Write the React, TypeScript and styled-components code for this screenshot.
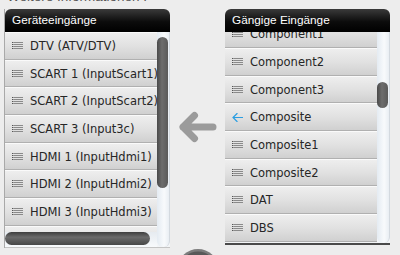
import React from 'react'
import styled, { createGlobalStyle } from 'styled-components'

const GlobalStyle = createGlobalStyle`
  html, body {
    margin: 0;
    padding: 0;
    background: #ededed;
    font-family: 'DejaVu Sans', Verdana, sans-serif;
  }
`

const Page = styled.div`
  width: 400px;
  height: 255px;
  overflow: hidden;
  padding-left: 4px;
  box-sizing: border-box;
`

const Intro = styled.div`
  margin: -10px 0 0 3px;
  height: 14px;
  line-height: 14px;
  font-family: 'Liberation Sans', Arial, sans-serif;
  font-size: 13.5px;
  color: #555;
`

const Columns = styled.div`
  display: flex;
  margin-top: 5px;
`

const Panel = styled.section<{ $width: number; $border?: boolean }>`
  width: ${(p) => p.$width}px;
  display: flex;
  flex-direction: column;
  box-sizing: border-box;
  border-left: ${(p) => (p.$border ? '1px solid #a9a9a9' : 'none')};
`

const PanelHeader = styled.header`
  height: 23px;
  border-radius: 6px 6px 0 0;
  background: linear-gradient(#3a3a3a, #0c0c0c 55%, #000);
  color: #fff;
  font-family: 'Liberation Sans', Arial, sans-serif;
  font-size: 11.8px;
  line-height: 23px;
  padding-left: 7px;
`

const PanelBody = styled.div<{ $height: number; $hscroll?: boolean; $shadow?: boolean }>`
  display: grid;
  grid-template-columns: 152px 1fr;
  grid-template-rows: ${(p) => (p.$hscroll ? '1fr 15px' : '1fr')};
  height: ${(p) => p.$height}px;
  border-bottom: ${(p) => (p.$shadow ? '2px solid #4a4a4a' : '1px solid #c4c4c4')};
  background: #f3f5f7;
`

const Viewport = styled.div`
  overflow: hidden;
`

const RowList = styled.ul<{ $offset: number }>`
  list-style: none;
  margin: ${(p) => -p.$offset}px 0 0;
  padding: 0;
`

const Row = styled.li`
  height: 27.7px;
  box-sizing: border-box;
  display: flex;
  align-items: center;
  gap: 7px;
  padding-left: 7px;
  background: linear-gradient(#eeeeee, #e1e1e1 50%, #d0d0d0);
  border-top: 1px solid #fafafa;
  border-bottom: 1px solid #b0b0b0;
  color: #262626;
  font-size: 11.5px;
  white-space: nowrap;
`

const RowIcon = styled.span`
  width: 11px;
  display: flex;
  align-items: center;
  flex: none;
`

const VTrack = styled.div<{ $span?: boolean }>`
  grid-row: ${(p) => (p.$span ? '1 / 3' : '1')};
  grid-column: 2;
  background: linear-gradient(90deg, #e4ebf2, #f8fafc 60%, #e9eef3);
  border-radius: 0 0 6px 6px;
  border-right: 1px solid #d3d9df;
  display: flex;
  flex-direction: column;
`

const VThumb = styled.div<{ $top: number; $length: number }>`
  margin: ${(p) => p.$top}px 1px 0 0;
  height: ${(p) => p.$length}px;
  width: 11px;
  border-radius: 6px;
  background: linear-gradient(90deg, #4a4a4a, #6d6d6d 45%, #5a5a5a);
`

const HTrack = styled.div`
  grid-row: 2;
  grid-column: 1;
  background: linear-gradient(#e6ebf0, #f8fafc);
  display: flex;
  align-items: flex-start;
  padding-right: 7px;
`

const HThumb = styled.div`
  flex: 1;
  height: 13px;
  border-radius: 7px;
  background: linear-gradient(#3e3e3e, #6b6b6b 40%, #474747);
`

const Middle = styled.div`
  width: 55px;
  display: flex;
  flex-direction: column;
  align-items: center;
`

const ArrowWrap = styled.div`
  margin-top: 102px;
`

const Disc = styled.div`
  margin: auto 0 -8px;
  height: 8px;
  overflow: hidden;
`

const HandleIcon = () => (
  <svg width="11" height="8" viewBox="0 0 11 8">
    {[0.5, 2.5, 4.5, 6.5].map((y) => (
      <g key={y}>
        <line x1="0" y1={y} x2="1.5" y2={y} stroke="#555" strokeWidth="1" />
        <line x1="2" y1={y} x2="11" y2={y} stroke="#8a8a8a" strokeWidth="1" />
      </g>
    ))}
  </svg>
)

const BackIcon = () => (
  <svg width="13" height="11" viewBox="0 0 13 11">
    <path d="M12.5 5.5H1.2M6 0.8L1.2 5.5L6 10.2" fill="none" stroke="#2a9ee2" strokeWidth="1.4" strokeLinecap="round" />
  </svg>
)

const BigArrow = () => (
  <svg width="40" height="32" viewBox="0 0 40 32">
    <path d="M35 16H5M16.5 4.5L5 16L16.5 27.5" fill="none" stroke="#9b9b9b" strokeWidth="7" strokeLinecap="round" strokeLinejoin="round" />
  </svg>
)

const DiscIcon = () => (
  <svg width="42" height="20" viewBox="0 0 42 20">
    <ellipse cx="21" cy="20" rx="20" ry="19" fill="#7c7c7c" />
    <ellipse cx="21" cy="21" rx="18" ry="17.5" fill="#595959" />
    <ellipse cx="21" cy="24" rx="12" ry="14" fill="#4c4c4c" />
  </svg>
)

type Item = { label: string; active?: boolean }

const deviceInputs: Item[] = [
  { label: 'DTV (ATV/DTV)' },
  { label: 'SCART 1 (InputScart1)' },
  { label: 'SCART 2 (InputScart2)' },
  { label: 'SCART 3 (Input3c)' },
  { label: 'HDMI 1 (InputHdmi1)' },
  { label: 'HDMI 2 (InputHdmi2)' },
  { label: 'HDMI 3 (InputHdmi3)' },
  { label: 'HDMI 4 (InputHdmi4)' },
]

const commonInputs: Item[] = [
  { label: 'Component1' },
  { label: 'Component2' },
  { label: 'Component3' },
  { label: 'Composite', active: true },
  { label: 'Composite1' },
  { label: 'Composite2' },
  { label: 'DAT' },
  { label: 'DBS' },
]

const InputList: React.FC<{ items: Item[]; offset: number }> = ({ items, offset }) => (
  <Viewport>
    <RowList $offset={offset}>
      {items.map((item) => (
        <Row key={item.label}>
          <RowIcon>{item.active ? <BackIcon /> : <HandleIcon />}</RowIcon>
          {item.label}
        </Row>
      ))}
    </RowList>
  </Viewport>
)

const App: React.FC = () => (
  <Page>
    <GlobalStyle />
    <Intro>Weitere Informationen :</Intro>
    <Columns>
      <Panel $width={166} $border>
        <PanelHeader>Geräteeingänge</PanelHeader>
        <PanelBody $height={215} $hscroll>
          <InputList items={deviceInputs} offset={0} />
          <VTrack $span>
            <VThumb $top={5} $length={151} />
          </VTrack>
          <HTrack>
            <HThumb />
          </HTrack>
        </PanelBody>
      </Panel>
      <Middle>
        <ArrowWrap>
          <BigArrow />
        </ArrowWrap>
        <Disc>
          <DiscIcon />
        </Disc>
      </Middle>
      <Panel $width={165}>
        <PanelHeader>Gängige Eingänge</PanelHeader>
        <PanelBody $height={211} $shadow>
          <InputList items={commonInputs} offset={11.7} />
          <VTrack>
            <VThumb $top={50} $length={26} />
          </VTrack>
        </PanelBody>
      </Panel>
    </Columns>
  </Page>
)

export default App
